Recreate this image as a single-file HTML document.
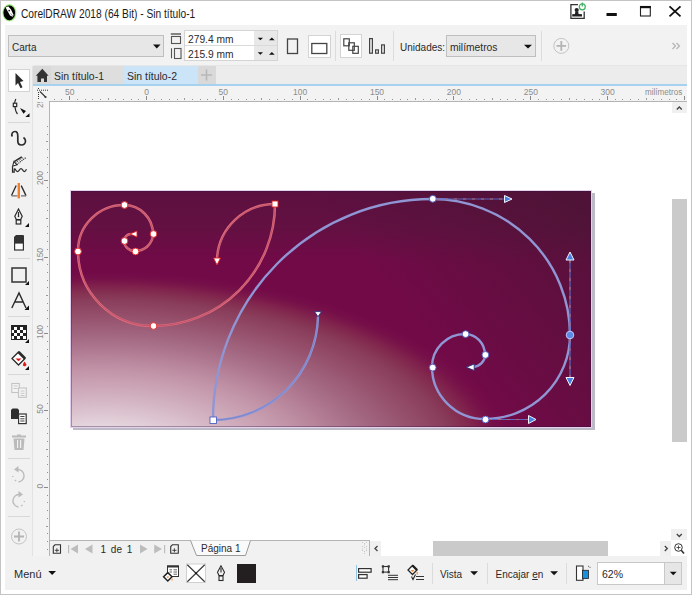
<!DOCTYPE html>
<html><head><meta charset="utf-8">
<style>
*{margin:0;padding:0;box-sizing:border-box}
html,body{width:697px;height:600px;overflow:hidden;background:#fff;font-family:"Liberation Sans",sans-serif;color:#222}
.a{position:absolute}
.t{position:absolute;white-space:nowrap;font-size:10px;line-height:12px;color:#2a2a2a}
.rl{position:absolute;width:40px;text-align:center;font-size:8.5px;line-height:9px;color:#8c8c8c;white-space:nowrap}
.rv{position:absolute;width:40px;height:12px;text-align:center;font-size:8.5px;line-height:12px;color:#8c8c8c;white-space:nowrap;transform:rotate(-90deg)}
.sep{position:absolute;width:1px;background:#dcdcdc}
.btnw{position:absolute;background:#fff;border:1px solid #d4d4d4}
</style></head><body>
<div class="a" style="left:0;top:0;width:692px;height:595px;border:1px solid #c4c4c4;background:#fff"></div>
<!-- title bar -->
<div class="t" style="left:21px;top:7px;font-size:12px;line-height:15px;color:#1a1a1a;transform-origin:0 0;transform:scaleX(0.85)">CorelDRAW 2018 (64 Bit) - Sin título-1</div>

<!-- property bar -->
<div class="a" style="left:5px;top:25px;width:682px;height:40px;background:#f2f2f2"></div>
<div class="a" style="left:5px;top:65px;width:682px;height:1px;background:#e6e6e6"></div>
<div class="a" style="left:8px;top:35px;width:156px;height:22px;background:#e7e7e7;border:1px solid #bfbfbf"></div>
<div class="t" style="left:12px;top:42px;font-size:10px">Carta</div>
<div class="a" style="left:184px;top:30px;width:94px;height:31px;background:#fff;border:1px solid #d4d4d4"></div>
<div class="a" style="left:254px;top:31px;width:23px;height:29px;background:#e8e8e8"></div>
<div class="a" style="left:185px;top:45px;width:92px;height:1px;background:#dadada"></div>
<div class="t" style="left:188px;top:33px;font-size:11px;line-height:12px;transform-origin:0 0;transform:scaleX(0.93)">279.4 mm</div>
<div class="t" style="left:188px;top:48px;font-size:11px;line-height:12px;transform-origin:0 0;transform:scaleX(0.93)">215.9 mm</div>
<div class="btnw" style="left:308px;top:35px;width:23px;height:23px"></div>
<div class="sep" style="left:335px;top:31px;height:30px"></div>
<div class="btnw" style="left:340px;top:34px;width:22px;height:24px"></div>
<div class="sep" style="left:393px;top:31px;height:30px"></div>
<div class="t" style="left:400px;top:41.5px;font-size:10px">Unidades:</div>
<div class="a" style="left:446px;top:35px;width:90px;height:22px;background:#e7e7e7;border:1px solid #bfbfbf"></div>
<div class="t" style="left:450px;top:40.5px;font-size:10.5px;transform-origin:0 0;transform:scaleX(0.98)">milímetros</div>
<div class="sep" style="left:541px;top:31px;height:30px"></div>

<!-- toolbox -->
<div class="a" style="left:5px;top:65px;width:28px;height:491px;background:#f1f1f1"></div>
<div class="a" style="left:32px;top:66px;width:1px;height:490px;background:#e2e2e2"></div>
<div class="btnw" style="left:8px;top:69px;width:22px;height:23px"></div>

<!-- tab row -->
<div class="a" style="left:33px;top:66px;width:654px;height:18px;background:#ececec"></div>
<div class="a" style="left:33px;top:66px;width:18px;height:18px;background:#d9d9d9"></div>
<div class="a" style="left:51px;top:66px;width:73px;height:18px;background:#dedede"></div>
<div class="a" style="left:124px;top:66px;width:74px;height:18px;background:#cce4f7"></div>
<div class="a" style="left:198px;top:66px;width:18px;height:18px;background:#d9d9d9"></div>
<div class="t" style="left:54px;top:70px;font-size:11px;line-height:12px;transform-origin:0 0;transform:scaleX(0.95)">Sin título-1</div>
<div class="t" style="left:127px;top:70px;font-size:11px;line-height:12px;transform-origin:0 0;transform:scaleX(0.95)">Sin título-2</div>
<div class="a" style="left:33px;top:84px;width:654px;height:2px;background:#a6d2ee"></div>

<!-- rulers -->
<div class="a" style="left:33px;top:86px;width:654px;height:15px;background:#f3f3f3"></div>
<div class="a" style="left:33px;top:101px;width:654px;height:1px;background:#b4b4b4"></div>
<div class="a" style="left:33px;top:86px;width:16px;height:470px;background:#f3f3f3"></div>
<div class="a" style="left:49px;top:101px;width:1px;height:455px;background:#b4b4b4"></div>
<div class="a" style="left:54px;top:99px;width:1px;height:1px;background:#909090"></div>
<div class="a" style="left:61px;top:99px;width:1px;height:1px;background:#909090"></div>
<div class="a" style="left:69px;top:96px;width:1px;height:4px;background:#8a8a8a"></div>
<div class="a" style="left:77px;top:99px;width:1px;height:1px;background:#909090"></div>
<div class="a" style="left:85px;top:99px;width:1px;height:1px;background:#909090"></div>
<div class="a" style="left:92px;top:99px;width:1px;height:1px;background:#909090"></div>
<div class="a" style="left:100px;top:99px;width:1px;height:1px;background:#909090"></div>
<div class="a" style="left:108px;top:98px;width:1px;height:2px;background:#9a9a9a"></div>
<div class="a" style="left:115px;top:99px;width:1px;height:1px;background:#909090"></div>
<div class="a" style="left:123px;top:99px;width:1px;height:1px;background:#909090"></div>
<div class="a" style="left:131px;top:99px;width:1px;height:1px;background:#909090"></div>
<div class="a" style="left:138px;top:99px;width:1px;height:1px;background:#909090"></div>
<div class="a" style="left:146px;top:96px;width:1px;height:4px;background:#8a8a8a"></div>
<div class="a" style="left:154px;top:99px;width:1px;height:1px;background:#909090"></div>
<div class="a" style="left:161px;top:99px;width:1px;height:1px;background:#909090"></div>
<div class="a" style="left:169px;top:99px;width:1px;height:1px;background:#909090"></div>
<div class="a" style="left:177px;top:99px;width:1px;height:1px;background:#909090"></div>
<div class="a" style="left:184px;top:98px;width:1px;height:2px;background:#9a9a9a"></div>
<div class="a" style="left:192px;top:99px;width:1px;height:1px;background:#909090"></div>
<div class="a" style="left:200px;top:99px;width:1px;height:1px;background:#909090"></div>
<div class="a" style="left:207px;top:99px;width:1px;height:1px;background:#909090"></div>
<div class="a" style="left:215px;top:99px;width:1px;height:1px;background:#909090"></div>
<div class="a" style="left:223px;top:96px;width:1px;height:4px;background:#8a8a8a"></div>
<div class="a" style="left:231px;top:99px;width:1px;height:1px;background:#909090"></div>
<div class="a" style="left:238px;top:99px;width:1px;height:1px;background:#909090"></div>
<div class="a" style="left:246px;top:99px;width:1px;height:1px;background:#909090"></div>
<div class="a" style="left:254px;top:99px;width:1px;height:1px;background:#909090"></div>
<div class="a" style="left:261px;top:98px;width:1px;height:2px;background:#9a9a9a"></div>
<div class="a" style="left:269px;top:99px;width:1px;height:1px;background:#909090"></div>
<div class="a" style="left:277px;top:99px;width:1px;height:1px;background:#909090"></div>
<div class="a" style="left:284px;top:99px;width:1px;height:1px;background:#909090"></div>
<div class="a" style="left:292px;top:99px;width:1px;height:1px;background:#909090"></div>
<div class="a" style="left:300px;top:96px;width:1px;height:4px;background:#8a8a8a"></div>
<div class="a" style="left:307px;top:99px;width:1px;height:1px;background:#909090"></div>
<div class="a" style="left:315px;top:99px;width:1px;height:1px;background:#909090"></div>
<div class="a" style="left:323px;top:99px;width:1px;height:1px;background:#909090"></div>
<div class="a" style="left:330px;top:99px;width:1px;height:1px;background:#909090"></div>
<div class="a" style="left:338px;top:98px;width:1px;height:2px;background:#9a9a9a"></div>
<div class="a" style="left:346px;top:99px;width:1px;height:1px;background:#909090"></div>
<div class="a" style="left:353px;top:99px;width:1px;height:1px;background:#909090"></div>
<div class="a" style="left:361px;top:99px;width:1px;height:1px;background:#909090"></div>
<div class="a" style="left:369px;top:99px;width:1px;height:1px;background:#909090"></div>
<div class="a" style="left:377px;top:96px;width:1px;height:4px;background:#8a8a8a"></div>
<div class="a" style="left:384px;top:99px;width:1px;height:1px;background:#909090"></div>
<div class="a" style="left:392px;top:99px;width:1px;height:1px;background:#909090"></div>
<div class="a" style="left:400px;top:99px;width:1px;height:1px;background:#909090"></div>
<div class="a" style="left:407px;top:99px;width:1px;height:1px;background:#909090"></div>
<div class="a" style="left:415px;top:98px;width:1px;height:2px;background:#9a9a9a"></div>
<div class="a" style="left:423px;top:99px;width:1px;height:1px;background:#909090"></div>
<div class="a" style="left:430px;top:99px;width:1px;height:1px;background:#909090"></div>
<div class="a" style="left:438px;top:99px;width:1px;height:1px;background:#909090"></div>
<div class="a" style="left:446px;top:99px;width:1px;height:1px;background:#909090"></div>
<div class="a" style="left:453px;top:96px;width:1px;height:4px;background:#8a8a8a"></div>
<div class="a" style="left:461px;top:99px;width:1px;height:1px;background:#909090"></div>
<div class="a" style="left:469px;top:99px;width:1px;height:1px;background:#909090"></div>
<div class="a" style="left:476px;top:99px;width:1px;height:1px;background:#909090"></div>
<div class="a" style="left:484px;top:99px;width:1px;height:1px;background:#909090"></div>
<div class="a" style="left:492px;top:98px;width:1px;height:2px;background:#9a9a9a"></div>
<div class="a" style="left:500px;top:99px;width:1px;height:1px;background:#909090"></div>
<div class="a" style="left:507px;top:99px;width:1px;height:1px;background:#909090"></div>
<div class="a" style="left:515px;top:99px;width:1px;height:1px;background:#909090"></div>
<div class="a" style="left:523px;top:99px;width:1px;height:1px;background:#909090"></div>
<div class="a" style="left:530px;top:96px;width:1px;height:4px;background:#8a8a8a"></div>
<div class="a" style="left:538px;top:99px;width:1px;height:1px;background:#909090"></div>
<div class="a" style="left:546px;top:99px;width:1px;height:1px;background:#909090"></div>
<div class="a" style="left:553px;top:99px;width:1px;height:1px;background:#909090"></div>
<div class="a" style="left:561px;top:99px;width:1px;height:1px;background:#909090"></div>
<div class="a" style="left:569px;top:98px;width:1px;height:2px;background:#9a9a9a"></div>
<div class="a" style="left:576px;top:99px;width:1px;height:1px;background:#909090"></div>
<div class="a" style="left:584px;top:99px;width:1px;height:1px;background:#909090"></div>
<div class="a" style="left:592px;top:99px;width:1px;height:1px;background:#909090"></div>
<div class="a" style="left:599px;top:99px;width:1px;height:1px;background:#909090"></div>
<div class="a" style="left:607px;top:96px;width:1px;height:4px;background:#8a8a8a"></div>
<div class="a" style="left:615px;top:99px;width:1px;height:1px;background:#909090"></div>
<div class="a" style="left:622px;top:99px;width:1px;height:1px;background:#909090"></div>
<div class="a" style="left:630px;top:99px;width:1px;height:1px;background:#909090"></div>
<div class="a" style="left:638px;top:99px;width:1px;height:1px;background:#909090"></div>
<div class="a" style="left:646px;top:98px;width:1px;height:2px;background:#9a9a9a"></div>
<div class="a" style="left:653px;top:99px;width:1px;height:1px;background:#909090"></div>
<div class="a" style="left:661px;top:99px;width:1px;height:1px;background:#909090"></div>
<div class="a" style="left:669px;top:99px;width:1px;height:1px;background:#909090"></div>
<div class="a" style="left:676px;top:99px;width:1px;height:1px;background:#909090"></div>
<div class="a" style="left:684px;top:96px;width:1px;height:4px;background:#8a8a8a"></div>
<div class="rl" style="left:49.7px;top:87.7px">50</div>
<div class="rl" style="left:126.5px;top:87.7px">0</div>
<div class="rl" style="left:203.3px;top:87.7px">50</div>
<div class="rl" style="left:280.2px;top:87.7px">100</div>
<div class="rl" style="left:357.0px;top:87.7px">150</div>
<div class="rl" style="left:433.9px;top:87.7px">200</div>
<div class="rl" style="left:510.8px;top:87.7px">250</div>
<div class="rl" style="left:587.6px;top:87.7px">300</div>
<div class="rl" style="left:644.5px;top:87.7px;width:auto;text-align:left;transform-origin:0 0;transform:scaleX(0.95)">milímetros</div>
<div class="a" style="left:47px;top:549px;width:1px;height:1px;background:#909090"></div>
<div class="a" style="left:47px;top:541px;width:1px;height:1px;background:#909090"></div>
<div class="a" style="left:47px;top:533px;width:1px;height:1px;background:#909090"></div>
<div class="a" style="left:46px;top:526px;width:2px;height:1px;background:#9a9a9a"></div>
<div class="a" style="left:47px;top:518px;width:1px;height:1px;background:#909090"></div>
<div class="a" style="left:47px;top:510px;width:1px;height:1px;background:#909090"></div>
<div class="a" style="left:47px;top:502px;width:1px;height:1px;background:#909090"></div>
<div class="a" style="left:47px;top:495px;width:1px;height:1px;background:#909090"></div>
<div class="a" style="left:44px;top:487px;width:4px;height:1px;background:#8a8a8a"></div>
<div class="a" style="left:47px;top:479px;width:1px;height:1px;background:#909090"></div>
<div class="a" style="left:47px;top:472px;width:1px;height:1px;background:#909090"></div>
<div class="a" style="left:47px;top:464px;width:1px;height:1px;background:#909090"></div>
<div class="a" style="left:47px;top:456px;width:1px;height:1px;background:#909090"></div>
<div class="a" style="left:46px;top:449px;width:2px;height:1px;background:#9a9a9a"></div>
<div class="a" style="left:47px;top:441px;width:1px;height:1px;background:#909090"></div>
<div class="a" style="left:47px;top:433px;width:1px;height:1px;background:#909090"></div>
<div class="a" style="left:47px;top:426px;width:1px;height:1px;background:#909090"></div>
<div class="a" style="left:47px;top:418px;width:1px;height:1px;background:#909090"></div>
<div class="a" style="left:44px;top:410px;width:4px;height:1px;background:#8a8a8a"></div>
<div class="a" style="left:47px;top:403px;width:1px;height:1px;background:#909090"></div>
<div class="a" style="left:47px;top:395px;width:1px;height:1px;background:#909090"></div>
<div class="a" style="left:47px;top:387px;width:1px;height:1px;background:#909090"></div>
<div class="a" style="left:47px;top:380px;width:1px;height:1px;background:#909090"></div>
<div class="a" style="left:46px;top:372px;width:2px;height:1px;background:#9a9a9a"></div>
<div class="a" style="left:47px;top:364px;width:1px;height:1px;background:#909090"></div>
<div class="a" style="left:47px;top:356px;width:1px;height:1px;background:#909090"></div>
<div class="a" style="left:47px;top:349px;width:1px;height:1px;background:#909090"></div>
<div class="a" style="left:47px;top:341px;width:1px;height:1px;background:#909090"></div>
<div class="a" style="left:44px;top:333px;width:4px;height:1px;background:#8a8a8a"></div>
<div class="a" style="left:47px;top:326px;width:1px;height:1px;background:#909090"></div>
<div class="a" style="left:47px;top:318px;width:1px;height:1px;background:#909090"></div>
<div class="a" style="left:47px;top:310px;width:1px;height:1px;background:#909090"></div>
<div class="a" style="left:47px;top:303px;width:1px;height:1px;background:#909090"></div>
<div class="a" style="left:46px;top:295px;width:2px;height:1px;background:#9a9a9a"></div>
<div class="a" style="left:47px;top:287px;width:1px;height:1px;background:#909090"></div>
<div class="a" style="left:47px;top:280px;width:1px;height:1px;background:#909090"></div>
<div class="a" style="left:47px;top:272px;width:1px;height:1px;background:#909090"></div>
<div class="a" style="left:47px;top:264px;width:1px;height:1px;background:#909090"></div>
<div class="a" style="left:44px;top:257px;width:4px;height:1px;background:#8a8a8a"></div>
<div class="a" style="left:47px;top:249px;width:1px;height:1px;background:#909090"></div>
<div class="a" style="left:47px;top:241px;width:1px;height:1px;background:#909090"></div>
<div class="a" style="left:47px;top:233px;width:1px;height:1px;background:#909090"></div>
<div class="a" style="left:47px;top:226px;width:1px;height:1px;background:#909090"></div>
<div class="a" style="left:46px;top:218px;width:2px;height:1px;background:#9a9a9a"></div>
<div class="a" style="left:47px;top:210px;width:1px;height:1px;background:#909090"></div>
<div class="a" style="left:47px;top:203px;width:1px;height:1px;background:#909090"></div>
<div class="a" style="left:47px;top:195px;width:1px;height:1px;background:#909090"></div>
<div class="a" style="left:47px;top:187px;width:1px;height:1px;background:#909090"></div>
<div class="a" style="left:44px;top:180px;width:4px;height:1px;background:#8a8a8a"></div>
<div class="a" style="left:47px;top:172px;width:1px;height:1px;background:#909090"></div>
<div class="a" style="left:47px;top:164px;width:1px;height:1px;background:#909090"></div>
<div class="a" style="left:47px;top:157px;width:1px;height:1px;background:#909090"></div>
<div class="a" style="left:47px;top:149px;width:1px;height:1px;background:#909090"></div>
<div class="a" style="left:46px;top:141px;width:2px;height:1px;background:#9a9a9a"></div>
<div class="a" style="left:47px;top:134px;width:1px;height:1px;background:#909090"></div>
<div class="a" style="left:47px;top:126px;width:1px;height:1px;background:#909090"></div>
<div class="a" style="left:33px;top:102px;width:16px;height:454px;overflow:hidden">
<div class="rv" style="left:-13px;top:-6.6px">250</div>
<div class="rv" style="left:-13px;top:70.2px">200</div>
<div class="rv" style="left:-13px;top:147.1px">150</div>
<div class="rv" style="left:-13px;top:223.9px">100</div>
<div class="rv" style="left:-13px;top:300.8px">50</div>
<div class="rv" style="left:-13px;top:377.6px">0</div>
</div>

<!-- canvas -->
<div class="a" style="left:50px;top:102px;width:637px;height:438px;background:#fff"></div>
<!-- v scrollbar -->
<div class="a" style="left:672px;top:102px;width:15px;height:11px;background:#f0f0f0"></div>
<div class="a" style="left:672px;top:199px;width:15px;height:243px;background:#cacaca"></div>
<div class="a" style="left:671px;top:529px;width:16px;height:11px;background:#f0f0f0"></div>

<!-- page nav bar -->
<div class="a" style="left:50px;top:540px;width:320px;height:16px;background:#f1f1f1;border-top:1px solid #b4b4b4;border-right:1px solid #b4b4b4"></div>
<div class="a" style="left:370px;top:541px;width:11px;height:15px;background:#f0f0f0"></div>
<div class="a" style="left:433px;top:541px;width:175px;height:15px;background:#cacaca"></div>
<div class="a" style="left:660px;top:541px;width:11px;height:15px;background:#f0f0f0"></div>
<div class="t" style="left:100.5px;top:544px;font-size:10px;word-spacing:2px">1 de 1</div>
<svg class="a" style="left:189px;top:540px" width="64" height="17"><path d="M1.5 0.5 L7.5 15.5 L56.5 15.5 L61.5 0.5" fill="#fafafa" stroke="#9a9a9a"/></svg>
<div class="t" style="left:201px;top:543px;font-size:10px">Página 1</div>

<!-- status bar -->
<div class="a" style="left:5px;top:556px;width:682px;height:34px;background:#f1f1f1"></div>
<div class="t" style="left:14px;top:567.5px;font-size:11px">Menú</div>
<div class="t" style="left:440px;top:569px;font-size:10px">Vista</div>
<div class="t" style="left:495.5px;top:569px;font-size:10px">Encajar <u>e</u>n</div>
<div class="sep" style="left:432px;top:563px;height:21px"></div>
<div class="sep" style="left:487px;top:563px;height:21px"></div>
<div class="sep" style="left:566px;top:563px;height:21px"></div>
<div class="a" style="left:597px;top:562px;width:85px;height:23px;background:#fff;border:1px solid #c8c8c8"></div>
<div class="a" style="left:664px;top:563px;width:17px;height:21px;background:#e6e6e6;border-left:1px solid #c8c8c8"></div>
<div class="t" style="left:602px;top:568px;font-size:10.5px">62%</div>
<div class="a" style="left:237px;top:564px;width:19px;height:19px;background:#231f20"></div>
<svg class="a" style="left:0;top:0" width="697" height="600" viewBox="0 0 697 600">
<!-- title logo -->
<ellipse cx="9.4" cy="12.8" rx="7.1" ry="8.7" fill="#c8f4b0"/><ellipse cx="9.4" cy="12.8" rx="6.6" ry="8.2" fill="#8ee06a"/>
<ellipse cx="9.3" cy="12.8" rx="5.8" ry="7.4" fill="#000"/>
<path d="M5.6 7.6 L8.2 6.2 L11 9.5 L13.6 15 L12.6 16.8 L10 15.5 L7.5 11 Z" fill="#fff"/>
<circle cx="9.2" cy="10.6" r="0.9" fill="#222"/>
<path d="M10.5 13.2 L12.8 16.2" stroke="#333" stroke-width="0.5"/>
<!-- user icon -->
<g fill="none" stroke="#333" stroke-width="1.3">
<path d="M578 4.7 L570.9 4.7 L570.9 18.3 L584.2 18.3 L584.2 11.5"/>
</g>
<circle cx="576.7" cy="10" r="2.1" fill="#222"/>
<path d="M575.3 11.5 L578.2 11.5 L578.6 14 L582 14.2 L582 16.6 L572.2 16.6 L572.2 14.2 L575 14 Z" fill="#222"/>
<circle cx="582.3" cy="6.8" r="3" fill="none" stroke="#3cb060" stroke-width="1.2"/>
<line x1="582.3" y1="2.6" x2="582.3" y2="6.5" stroke="#3cb060" stroke-width="1.2"/>
<!-- min max close -->
<rect x="606.5" y="13" width="10.3" height="3" fill="#111"/>
<rect x="640.5" y="6.5" width="9.8" height="9.5" fill="none" stroke="#222" stroke-width="1.1"/>
<rect x="640" y="6" width="10.8" height="2.2" fill="#111"/>
<path d="M669.5 6.3 L680.5 16.3 M680.5 6.3 L669.5 16.3" stroke="#111" stroke-width="1.8"/>

<!-- property bar icons -->
<path d="M153 44.5 L160.5 44.5 L156.75 48.5 Z" fill="#111"/>
<g fill="none" stroke="#555" stroke-width="1.1">
<line x1="170.8" y1="34" x2="181" y2="34" stroke-width="1.4"/>
<rect x="171.5" y="36.5" width="9" height="7"/>
<line x1="171.5" y1="48.3" x2="171.5" y2="58.3"/>
<rect x="174.5" y="48.5" width="6.5" height="10"/>
<rect x="287.5" y="39" width="10" height="14.5" stroke="#444" stroke-width="1.3"/>
<rect x="311.8" y="43.5" width="15" height="10" stroke="#444" stroke-width="1.3"/>
<g stroke="#444" stroke-width="1.2">
<rect x="343.8" y="38.8" width="5.5" height="7"/>
<rect x="348.8" y="42.8" width="5.5" height="7.5"/>
<rect x="352.8" y="46.3" width="5.5" height="7"/>
<rect x="369.6" y="38.6" width="2.8" height="14.6"/>
<rect x="375.6" y="49.9" width="2.8" height="3.3"/>
<rect x="381.6" y="44.9" width="2.8" height="8.3"/>
</g>
</g>
<g fill="#111">
<path d="M257.7 37.8 L263 37.8 L260.35 40.2 Z"/>
<path d="M269 40.2 L274.7 40.2 L271.85 37.6 Z"/>
<path d="M257.7 52.3 L263 52.3 L260.35 54.7 Z"/>
<path d="M269 54.7 L274.7 54.7 L271.85 52.1 Z"/>
<path d="M524 44.8 L532 44.8 L528 48.6 Z"/>
</g>
<circle cx="561.3" cy="45.9" r="7.5" fill="none" stroke="#c4c4c4" stroke-width="1"/>
<path d="M556.5 45.9 L566.1 45.9 M561.3 41.1 L561.3 50.7" stroke="#b4b4b4" stroke-width="1.8"/>
<path d="M672.5 43 L675.5 46 L672.5 49 M676.5 43 L679.5 46 L676.5 49" fill="none" stroke="#b0b0b0" stroke-width="1.1"/>

<!-- toolbox -->
<g fill="#d8d8d8">
<rect x="8" y="122" width="22" height="1"/>
<rect x="8" y="258" width="22" height="1"/>
<rect x="8" y="316" width="22" height="1"/>
<rect x="8" y="374" width="22" height="1"/>
<rect x="8" y="458" width="22" height="1"/>
<rect x="8" y="516" width="22" height="1"/>
</g>
<path d="M15.5 73 L23.5 81 L20 82 L22.5 87.3 L20.5 88.3 L18 83 L15.5 85.5 Z" fill="#2a2a2a"/>
<g fill="none" stroke="#2a2a2a" stroke-width="1.2">
<path d="M15.8 99 C15 101 14.6 102.5 14.8 103"/>
<rect x="13.3" y="103.2" width="3.4" height="3.4"/>
<path d="M15 107 C15.3 110 16 112.5 17.5 114"/>
</g>
<g fill="#111">
<path d="M20 108 L26 111 L23.5 113.8 Z"/>
<path d="M29.5 113.3 L29.5 117 L25.3 117 Z"/>
</g>
<path d="M12.2 136.5 C11 133.5 12.8 131.5 15 131.5 C17.3 131.5 17.8 133.5 17.8 136 L17.8 141 C17.8 143.6 19.2 145 21.5 145 C23.8 145 25.5 143.2 25.5 141 C25.5 139.5 24.6 138.3 23.5 137.5" fill="none" stroke="#2a2a2a" stroke-width="1.7"/>
<!-- artistic media -->
<g fill="none" stroke="#2a2a2a">
<path d="M14.2 161.6 L21.8 156.9" stroke-width="1.7"/>
<path d="M16.8 164.6 L25.8 157.6" stroke-width="1.1" stroke-dasharray="1.2 0.8"/>
<path d="M15.6 162.9 L23.6 157.2" stroke-width="0.9" stroke-dasharray="1 1"/>
<path d="M13.9 161.6 L12.6 166.2 L17 164.8 Z" fill="#fff" stroke-width="1.1"/>
<path d="M12.5 166.5 L12.5 172.2 L14.2 172.2 L14.2 169 C15.4 168.2 16 171.6 17.6 171.6 C19.1 171.6 19.5 168.6 21 168.6 C22.5 168.6 23 171.6 24.4 171.6 C25.5 171.6 26 170.2 26.5 169.2" stroke-width="1.2"/>
</g>
<!-- symmetry -->
<path d="M16.2 185.4 L11.5 195.6 M21.2 185.6 L26 195.6" fill="none" stroke="#2a2a2a" stroke-width="1.3"/>
<path d="M11.5 195.8 L17.5 195.8 M21 195.8 L26.2 195.8" stroke="#707070" stroke-width="1.2"/>
<rect x="17.6" y="183" width="2.4" height="15.4" fill="#f08030"/>
<!-- pen -->
<g fill="none" stroke="#2a2a2a" stroke-width="1.2">
<path d="M18.5 209 L14.8 216.3 L16.3 219.5 L20.7 219.5 L22.2 216.3 Z"/>
<rect x="16.2" y="220" width="4.6" height="4"/>
<line x1="18.5" y1="212" x2="18.5" y2="216"/>
</g>
<circle cx="18.5" cy="216.5" r="0.8" fill="#2a2a2a"/>
<path d="M29 223 L29 227 L25 227 Z" fill="#111"/>
<!-- eraser -->
<path d="M16 235 L23.5 235 L24 235.5 L24 243 L14 243 L14 237 Z" fill="#333"/>
<rect x="14.6" y="243" width="8.8" height="7" fill="#fff" stroke="#333" stroke-width="1.2"/>
<!-- rectangle -->
<rect x="12" y="268" width="14" height="14" fill="none" stroke="#333" stroke-width="1.5"/>
<path d="M29 281 L29 285 L25 285 Z" fill="#111"/>
<!-- A -->
<path d="M11.8 308 L19 293 L26 308 M14.6 302 L23.4 302" fill="none" stroke="#2a2a2a" stroke-width="1.4"/>
<path d="M29 305.5 L29 310 L24.5 310 Z" fill="#111"/>
<!-- checker -->
<rect x="11" y="325" width="16" height="15" fill="#222"/>
<g fill="#fff">
<rect x="14" y="327" width="3" height="3"/><rect x="20" y="327" width="3" height="3"/>
<rect x="17" y="330" width="3" height="3"/><rect x="23" y="330" width="3" height="3"/><rect x="11.8" y="330" width="2.2" height="3"/>
<rect x="14" y="333" width="3" height="3"/><rect x="20" y="333" width="3" height="3"/>
<rect x="17" y="336" width="3" height="3"/><rect x="23" y="336" width="3" height="3"/><rect x="11.8" y="336" width="2.2" height="3"/>
</g>
<path d="M29 339 L29 343 L25 343 Z" fill="#111"/>
<!-- fill -->
<path d="M18.5 352 L12 358.5 L18.5 365 L25 358.5 Z" fill="#fff" stroke="#2a2a2a" stroke-width="1.3"/>
<path d="M18.5 352 L25 358.5" stroke="#2a2a2a" stroke-width="2.6"/>
<path d="M15.5 358.5 L21.5 358.5 L18.5 361.3 Z" fill="#e01818"/>
<path d="M24.5 361.5 C23 363.5 22.5 365 23.5 366 C24.5 366.8 26.5 366 26.5 364.5 Z" fill="#e01818"/>
<path d="M29 366 L29 370 L25 370 Z" fill="#111"/>
<!-- copy props (disabled) -->
<g fill="#f4f4f4" stroke="#c4c4c4" stroke-width="1.1">
<rect x="11.8" y="383.5" width="7.5" height="9"/>
<rect x="18.5" y="388" width="7.8" height="9.3"/>
</g>
<g stroke="#c8c8c8" stroke-width="1"><path d="M13.5 386 L17.5 386 M13.5 388.5 L17.5 388.5 M20.5 391 L24.5 391 M20.5 393.3 L24.5 393.3 M20.5 395.5 L24.5 395.5"/></g>
<!-- copy -->
<path d="M12.5 408.5 L17.5 408.5 L19 410 L19 419 L11 419 L11 410 Z" fill="#2e2e2e"/>
<rect x="18.6" y="414" width="7.6" height="9.6" fill="#fff" stroke="#333" stroke-width="1.2"/>
<path d="M20.3 416.5 L24.5 416.5 M20.3 418.8 L24.5 418.8 M20.3 421 L24.5 421" stroke="#444" stroke-width="1"/>
<!-- trash -->
<g fill="#bbb">
<rect x="12" y="435.5" width="14" height="2"/>
<rect x="17" y="434.5" width="4" height="1.5"/>
<path d="M13.5 438.5 L24.5 438.5 L23.5 450 L14.5 450 Z"/>
</g>
<rect x="17" y="440" width="1.2" height="8" fill="#f1f1f1"/>
<rect x="20" y="440" width="1.2" height="8" fill="#f1f1f1"/>
<!-- undo/redo -->
<g fill="none" stroke="#bbb" stroke-width="1.4">
<path d="M17 469.5 A6 6 0 1 1 18.5 482"/>
<path d="M16 481 L15 480" /><path d="M12.8 477 L12.6 476"/>
<path d="M20 494.5 A6 6 0 1 0 18.5 507"/>
<path d="M21 506 L22.5 505" /><path d="M24.2 502 L24.5 501"/>
</g>
<path d="M18.5 466 L14 469.5 L18.5 472.5 Z" fill="#bbb"/>
<path d="M18.5 491 L23 494.5 L18.5 497.5 Z" fill="#bbb"/>
<circle cx="19" cy="536.5" r="7.5" fill="none" stroke="#c4c4c4" stroke-width="1"/>
<path d="M14 536.5 L24 536.5 M19 531.5 L19 541.5" stroke="#b4b4b4" stroke-width="1.8"/>

<!-- tabs -->
<path d="M42.3 68.8 L35.8 75.8 L37.4 75.8 L37.4 82 L41 82 L41 78.5 L44 78.5 L44 82 L47 82 L47 75.8 L48.6 75.8 Z" fill="#333"/>
<path d="M201 75 L212 75 M206.5 69.5 L206.5 80.5" stroke="#b8b8b8" stroke-width="1.6"/>
<!-- ruler corner -->
<g fill="#333">
<rect x="37" y="89.7" width="1" height="1"/><rect x="39" y="89.7" width="1" height="1"/><rect x="41" y="89.7" width="1" height="1"/><rect x="43" y="89.7" width="1" height="1"/><rect x="45" y="89.7" width="1" height="1"/><rect x="47" y="89.7" width="1" height="1"/>
<rect x="38" y="88" width="1" height="1"/><rect x="38" y="92" width="1" height="1"/><rect x="38" y="94" width="1" height="1"/><rect x="38" y="96" width="1" height="1"/><rect x="38" y="98" width="1" height="1"/>
</g>
<path d="M40 91.5 L45.5 97" stroke="#333" stroke-width="1.1"/>
<circle cx="45.5" cy="97" r="1.1" fill="#333"/>

<!-- scroll arrows -->
<path d="M676.8 109.5 L679.3 107 L681.8 109.5" fill="none" stroke="#444" stroke-width="1.3"/>
<path d="M676.8 534 L679.3 536.5 L681.8 534" fill="none" stroke="#444" stroke-width="1.3"/>
<path d="M377.5 546 L375 548.5 L377.5 551" fill="none" stroke="#444" stroke-width="1.3"/>
<path d="M664.8 546 L667.3 548.5 L664.8 551" fill="none" stroke="#444" stroke-width="1.3"/>
<circle cx="678.5" cy="547.5" r="3.8" fill="none" stroke="#333" stroke-width="1"/>
<path d="M676.5 547.5 L680.5 547.5 M678.5 545.5 L678.5 549.5" stroke="#333" stroke-width="0.8"/>
<path d="M681.2 550.2 L684 553.5" stroke="#333" stroke-width="1.6"/>
<!-- grip -->
<g fill="#c8c8c8">
<rect x="362" y="542" width="1" height="1"/><rect x="364" y="543" width="1" height="1"/><rect x="366" y="542" width="1" height="1"/>
<rect x="362" y="546" width="1" height="1"/><rect x="364" y="547" width="1" height="1"/><rect x="366" y="546" width="1" height="1"/>
<rect x="362" y="550" width="1" height="1"/><rect x="364" y="551" width="1" height="1"/><rect x="366" y="550" width="1" height="1"/>
<rect x="364" y="544.5" width="1" height="1"/><rect x="362" y="548.5" width="1" height="1"/><rect x="366" y="548.5" width="1" height="1"/><rect x="364" y="553" width="1" height="1"/>
</g>

<!-- nav bar -->
<g fill="none" stroke="#333" stroke-width="1.1">
<path d="M55 544.8 L60.5 544.8 L60.5 553.2 L53.3 553.2 L53.3 546.5 Z"/>
<path d="M172.4 544.8 L178.3 544.8 L178.3 553.2 L170.7 553.2 L170.7 546.5 Z"/>
<path d="M54.8 550.3 L59 550.3 M56.9 548.3 L56.9 552.3 M172.3 550.3 L176.5 550.3 M174.4 548.3 L174.4 552.3" stroke-width="0.9"/>
</g>
<g fill="#bdbdbd">
<rect x="68" y="545" width="1.2" height="8.3"/>
<path d="M78 544.5 L70.5 549 L78 553.5 Z"/>
<path d="M92.5 544.5 L85 549 L92.5 553.5 Z"/>
<path d="M140 544.5 L147.6 549 L140 553.5 Z"/>
<path d="M154.2 544.5 L162 549 L154.2 553.5 Z"/>
<rect x="164" y="545" width="1.2" height="8.3"/>
</g>

<!-- status bar -->
<path d="M48.3 571 L56 571 L52.15 575 Z" fill="#111"/>
<path d="M470.2 571.3 L478 571.3 L474.1 575.2 Z" fill="#111"/>
<path d="M550.2 571.3 L558 571.3 L554.1 575.2 Z" fill="#111"/>
<path d="M669.8 571.8 L676.7 571.8 L673.25 575.3 Z" fill="#111"/>
<!-- object props -->
<rect x="167.5" y="566" width="11" height="10.5" fill="#fff" stroke="#333" stroke-width="1"/>
<rect x="167" y="565.5" width="12" height="2" fill="#333"/>
<path d="M169.5 569.8 L172 569.8 M173.5 569.8 L177 569.8 M169.5 572 L172 572 M173.5 572 L177 572 M173.5 574.2 L177 574.2" stroke="#666" stroke-width="1"/>
<path d="M167.8 572.6 L172 576.8 L167.8 581 L163.6 576.8 Z" fill="#fff" stroke="#222" stroke-width="1.5"/>
<path d="M166.3 576.5 L169.3 576.5 L167.8 578.2 Z" fill="#f08838"/>
<rect x="171.5" y="578.5" width="1.2" height="2" fill="#f0a060"/>
<!-- X box -->
<rect x="186.5" y="564" width="19" height="18.5" fill="#fff" stroke="#d0d0d0" stroke-width="1"/>
<path d="M187.3 564.8 L204.7 581.7 M204.7 564.8 L187.3 581.7" stroke="#3a3a3a" stroke-width="1.2"/>
<circle cx="196" cy="573.3" r="1" fill="#111"/>
<!-- pen nib -->
<g fill="none" stroke="#2a2a2a" stroke-width="1.1">
<path d="M221 565.8 L217.5 572.3 L219 575.5 L223 575.5 L224.5 572.3 Z"/>
<rect x="219" y="576" width="4" height="4.5"/>
<line x1="221" y1="568" x2="221" y2="572.5"/>
</g>
<!-- align -->
<g fill="#3a9ad8"><rect x="356" y="565.5" width="1" height="1"/><rect x="356" y="567.5" width="1" height="1"/><rect x="356" y="569.5" width="1" height="1"/><rect x="356" y="571.5" width="1" height="1"/><rect x="356" y="573.5" width="1" height="1"/><rect x="356" y="575.5" width="1" height="1"/><rect x="356" y="577.5" width="1" height="1"/><rect x="356" y="579.5" width="1" height="1"/></g>
<g fill="#fff" stroke="#333" stroke-width="1.2">
<rect x="358.6" y="568.6" width="12.5" height="3.6"/>
<rect x="358.6" y="574.6" width="8.5" height="3.6"/>
</g>
<!-- transform -->
<rect x="383" y="566.5" width="5.6" height="5.6" fill="none" stroke="#333" stroke-width="1.1"/>
<g fill="#333"><rect x="381.8" y="565.3" width="2.2" height="2.2"/><rect x="387.6" y="565.3" width="2.2" height="2.2"/><rect x="381.8" y="571.1" width="2.2" height="2.2"/><rect x="387.6" y="571.1" width="2.2" height="2.2"/></g>
<path d="M388 575.3 L398 575.3 M388 577.5 L398 577.5 M388 579.7 L398 579.7" stroke="#333" stroke-width="1"/>
<!-- fill list -->
<path d="M412.5 565.5 L417 570 L412.5 574.5 L408 570 Z" fill="#fff" stroke="#222" stroke-width="1.3"/>
<path d="M412.5 565.5 L417 570" stroke="#222" stroke-width="2.4"/>
<path d="M410.5 570 L414.5 570 L412.5 572 Z" fill="#f08838"/>
<rect x="416.5" y="572" width="1.5" height="2.5" fill="#f0a060"/>
<path d="M411.5 576.5 L413 579.5 L415.5 574.5" fill="none" stroke="#222" stroke-width="1.1"/>
<path d="M416 576.5 L424 576.5 M416 579.5 L424 579.5" stroke="#333" stroke-width="1.1"/>
<!-- zoom icon -->
<rect x="576.5" y="566" width="6.5" height="14.3" fill="#fff" stroke="#333" stroke-width="1.1"/>
<rect x="582.5" y="570.3" width="6" height="8.2" fill="#1890e0" stroke="#222" stroke-width="0.8"/>
<rect x="588" y="565.8" width="1" height="1" fill="#555"/><rect x="589.5" y="566.8" width="1" height="1" fill="#555"/>
</svg>

<svg class="a" style="left:0;top:0" width="697" height="600" viewBox="0 0 697 600">
<defs>
<radialGradient id="g1" gradientUnits="userSpaceOnUse" cx="100" cy="470" r="430" gradientTransform="translate(100 470) scale(1 0.475) translate(-100 -470)">
<stop offset="0" stop-color="#f2eaf0"/>
<stop offset="0.221" stop-color="#e4d4dc"/>
<stop offset="0.344" stop-color="#d4b5c3"/>
<stop offset="0.488" stop-color="#c294a8"/>
<stop offset="0.663" stop-color="#a26680"/>
<stop offset="0.779" stop-color="#924a66"/>
<stop offset="0.828" stop-color="#8a3f5c"/>
<stop offset="0.865" stop-color="#853252"/>
<stop offset="0.907" stop-color="#7e1e4b"/>
<stop offset="0.98" stop-color="#720a48" stop-opacity="0"/>
</radialGradient>
<linearGradient id="g0" gradientUnits="userSpaceOnUse" x1="0" y1="191" x2="0" y2="262">
<stop offset="0" stop-color="#5c1040"/>
<stop offset="0.5" stop-color="#631042"/>
<stop offset="1" stop-color="#720a48"/>
</linearGradient>
<linearGradient id="g2" gradientUnits="userSpaceOnUse" x1="600" y1="180" x2="420" y2="330">
<stop offset="0" stop-color="#4a1434" stop-opacity="0.85"/>
<stop offset="1" stop-color="#4a1434" stop-opacity="0"/>
</linearGradient>
</defs>
<rect x="592" y="193" width="3" height="237" fill="#bcbac6"/>
<rect x="73" y="428" width="522" height="2" fill="#bcbac6"/>
<rect x="70" y="190" width="522" height="238" fill="#e2d0ec"/>
<rect x="71" y="191" width="520" height="236" fill="url(#g0)"/>
<rect x="71" y="191" width="520" height="236" fill="url(#g2)"/>
<rect x="71" y="191" width="520" height="236" fill="url(#g1)"/>
<rect x="71.5" y="191.5" width="519" height="235" fill="none" stroke="#301040" stroke-opacity="0.35"/>
<g fill="none" stroke-linecap="round">
<path id="rs" d="M275 204 A122 122 0 0 1 153 326 A75 75 0 0 1 78 251 A46 46 0 0 1 124 205 A29 29 0 0 1 153 234 A17.5 17.5 0 0 1 135 251 A10.5 10.5 0 0 1 124 241 A7 7 0 0 1 131 234 M275 204 A58 58 0 0 0 217 259" stroke="#dc6a7c" stroke-width="2.5"/>
<path d="M275 204 A122 122 0 0 1 153 326 A75 75 0 0 1 78 251 A46 46 0 0 1 124 205 A29 29 0 0 1 153 234 A17.5 17.5 0 0 1 135 251 A10.5 10.5 0 0 1 124 241 A7 7 0 0 1 131 234 M275 204 A58 58 0 0 0 217 259" stroke="#b84862" stroke-width="0.9" stroke-opacity="0.8"/>
<path d="M213 420 A219 221 0 0 1 432 199 A138 136 0 0 1 570 335 A85 84 0 0 1 485 419 A53 52 0 0 1 432 367 A33 33 0 0 1 465 334 A20 21 0 0 1 485 355 A13 12 0 0 1 473 367 M213 420 A105 106 0 0 0 318 317" stroke="#9096d4" stroke-width="2.4"/>
<path d="M213 420 A105 106 0 0 0 318 317" stroke="#6a7ad0" stroke-width="0.8" stroke-opacity="0.8"/>
</g>
<g stroke-width="1.2">
<path d="M436 199 L505 199 M570 260 L570 331 M570 339 L570 378 M489 419.5 L529 419.5" stroke="#5a66c0"/>
<path d="M436 199 L505 199 M570 260 L570 331 M570 339 L570 378 M489 419.5 L529 419.5" stroke="#b06878" stroke-dasharray="3 6"/>
</g>
<g fill="#4a7ee0" stroke="#f0f4ff" stroke-width="1">
<path d="M504.5 195.5 L512 199 L504.5 202.5 Z"/>
<path d="M566 260 L570 252 L574 260 Z"/>
<path d="M566 377.5 L570 385.5 L574 377.5 Z"/>
<path d="M528.5 415.5 L536 419.5 L528.5 423.5 Z"/>
</g>
<g fill="#fff" stroke="#e01c1c" stroke-width="0.9">
<circle cx="124.5" cy="205" r="3.4"/>
<circle cx="153.5" cy="234" r="3.4"/>
<circle cx="135.5" cy="251.5" r="3.4"/>
<circle cx="124.5" cy="241" r="3.4"/>
<circle cx="78" cy="251.5" r="3.4"/>
<circle cx="153.5" cy="326" r="3.4"/>
<rect x="272" y="201" width="6" height="6"/>
<path d="M213.5 258 L220.5 258 L217 265 Z"/>
<path d="M137 231 L130 234 L137 237 Z"/>
</g>
<g fill="#fff" stroke="#4858c0" stroke-width="0.9">
<path d="M474.2 364 L466.3 367.3 L474.2 370.5 Z" stroke="#283080"/>
<path d="M314.5 311.6 L321.5 311.6 L318 316.8 Z" stroke="#283080"/>
<circle cx="432.8" cy="198.8" r="3.4"/>
<circle cx="485.5" cy="419.5" r="3.4"/>
<circle cx="432.7" cy="367.6" r="3.4"/>
<circle cx="465.6" cy="334.1" r="3.4"/>
<circle cx="485.4" cy="354.9" r="3.4"/>
<rect x="210" y="417" width="6.5" height="6.5" stroke="#5060c0"/>
</g>
<circle cx="570" cy="335" r="3.8" fill="#5a88e8" stroke="#c8d0f8" stroke-width="0.9"/>
</svg>

</body></html>
